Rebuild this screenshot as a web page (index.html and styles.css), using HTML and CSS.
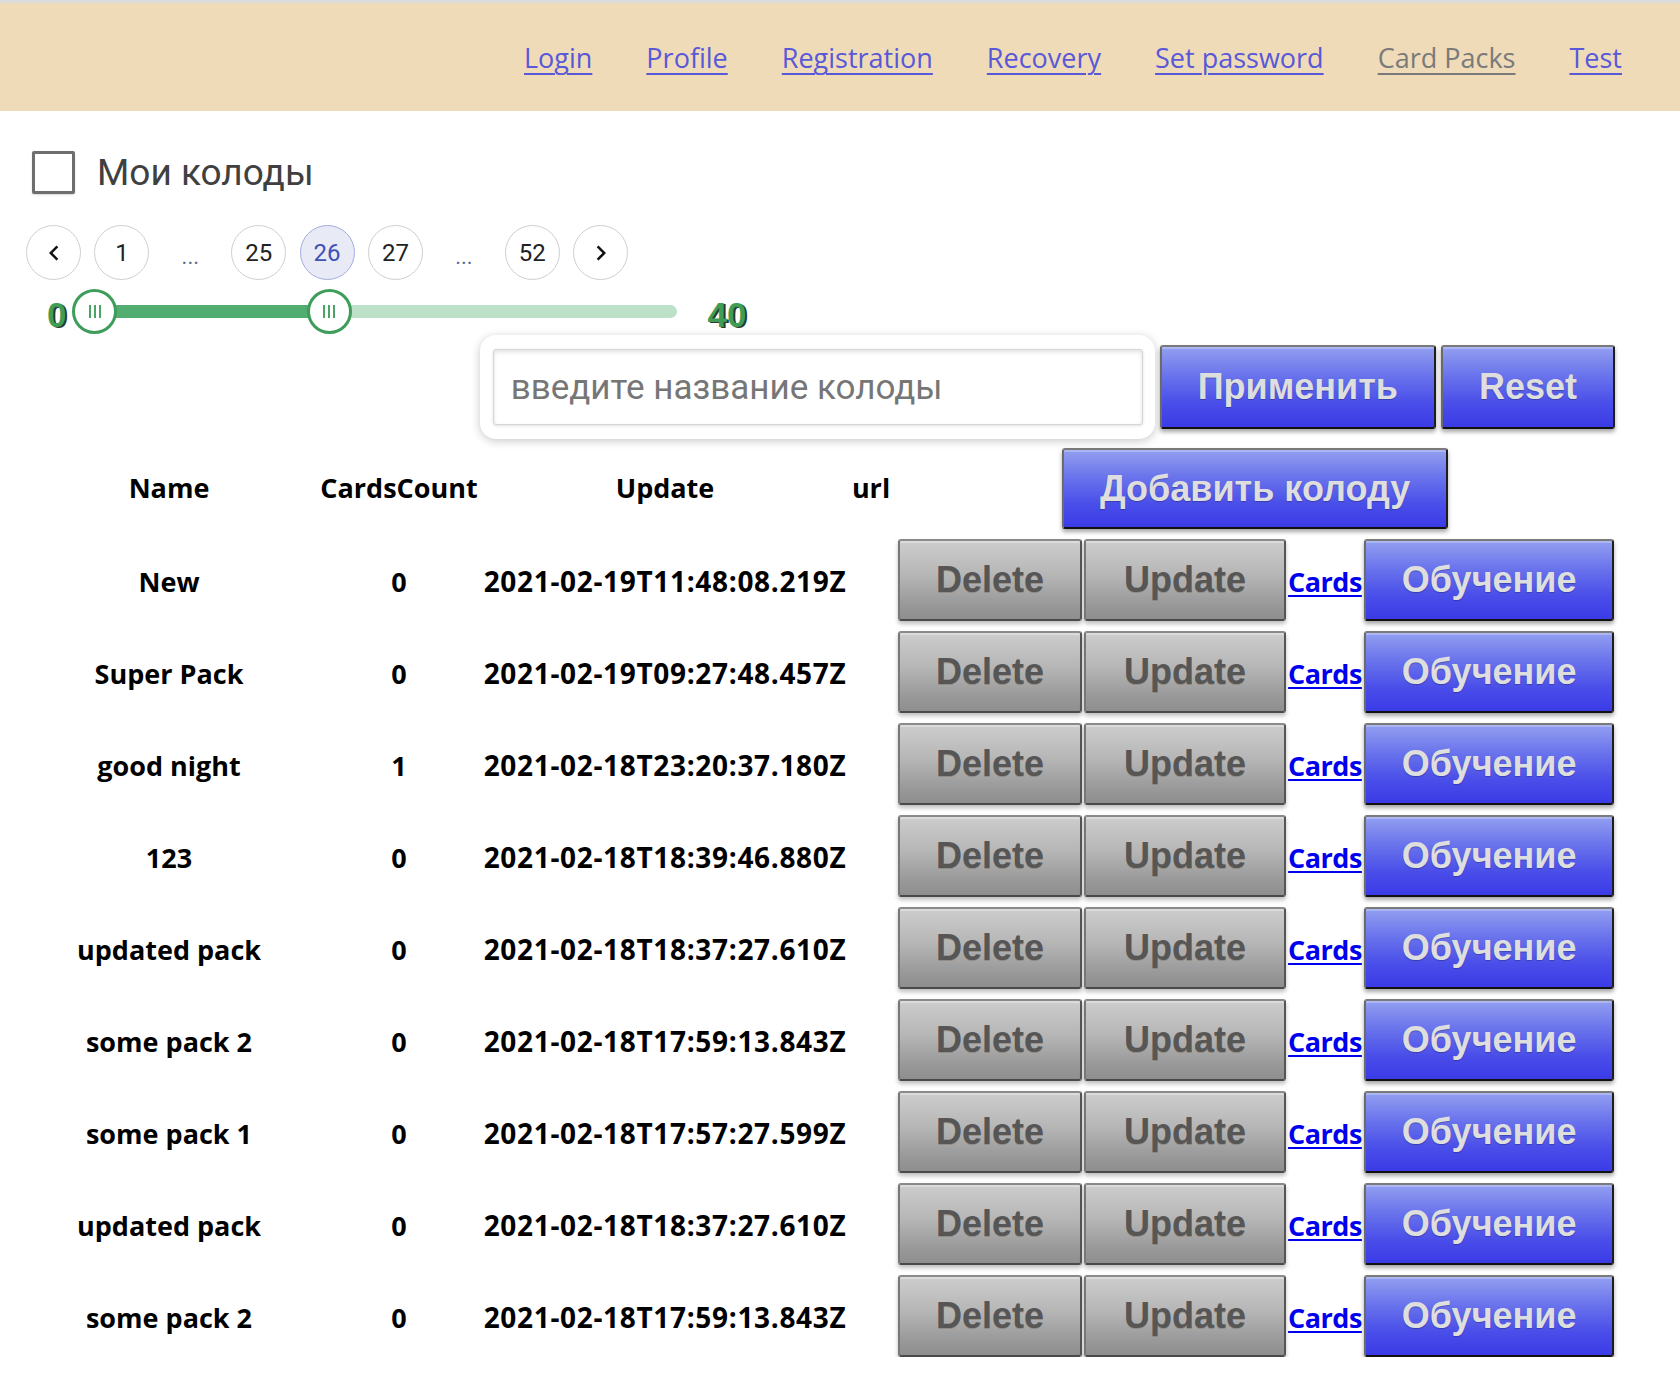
FILE: index.html
```html
<!DOCTYPE html>
<html lang="ru">
<head>
<meta charset="utf-8">
<title>Card Packs</title>
<link rel="stylesheet" href="styles.css">
</head>
<body>
<header class="topbar">
  <nav class="nav">
    <a href="#" class="nav-link">Login</a>
    <a href="#" class="nav-link">Profile</a>
    <a href="#" class="nav-link">Registration</a>
    <a href="#" class="nav-link">Recovery</a>
    <a href="#" class="nav-link">Set password</a>
    <a href="#" class="nav-link nav-link--active">Card Packs</a>
    <a href="#" class="nav-link">Test</a>
  </nav>
</header>

<main class="page">
  <label class="mine">
    <span class="mine-box"></span>
    <span class="mine-text">Мои колоды</span>
  </label>

  <div class="pager">
    <button class="pg pg-arrow" aria-label="prev"><svg viewBox="0 0 24 24" class="chev"><path d="M15.41 7.41L14 6l-6 6 6 6 1.41-1.41L10.83 12z"/></svg></button>
    <button class="pg">1</button>
    <span class="pg-ell">...</span>
    <button class="pg">25</button>
    <button class="pg pg-active">26</button>
    <button class="pg">27</button>
    <span class="pg-ell">...</span>
    <button class="pg">52</button>
    <button class="pg pg-arrow" aria-label="next"><svg viewBox="0 0 24 24" class="chev"><path d="M10 6L8.59 7.41 13.17 12l-4.58 4.59L10 18l6-6z"/></svg></button>
  </div>

  <div class="range">
    <span class="range-val">0</span>
    <div class="slider">
      <div class="track">
        <div class="track-fill" style="width: 40.2%"></div>
      </div>
      <span class="thumb" style="left: 0%"><i></i><i></i><i></i></span>
      <span class="thumb" style="left: 37.4%"><i></i><i></i><i></i></span>
    </div>
    <span class="range-val">40</span>
  </div>

  <div class="search-row">
    <div class="search-card">
      <input class="search-input" type="text" placeholder="введите название колоды">
    </div>
    <button class="btn btn-blue btn-tall">Применить</button>
    <button class="btn btn-blue btn-tall">Reset</button>
  </div>

  <div class="thead">
    <div class="cell">Name</div>
    <div class="cell">CardsCount</div>
    <div class="cell">Update</div>
    <div class="cell">url</div>
    <button class="btn btn-blue btn-add">Добавить колоду</button>
  </div>

  <div class="rows">
    <div class="row"><div class="cell">New</div><div class="cell">0</div><div class="cell cell-date">2021-02-19T11:48:08.219Z</div>
      <div class="actions"><button class="btn btn-gray">Delete</button><button class="btn btn-gray btn-upd">Update</button><a href="#" class="cards-link">Cards</a><button class="btn btn-blue">Обучение</button></div></div>
    <div class="row"><div class="cell">Super Pack</div><div class="cell">0</div><div class="cell cell-date">2021-02-19T09:27:48.457Z</div>
      <div class="actions"><button class="btn btn-gray">Delete</button><button class="btn btn-gray btn-upd">Update</button><a href="#" class="cards-link">Cards</a><button class="btn btn-blue">Обучение</button></div></div>
    <div class="row"><div class="cell">good night</div><div class="cell">1</div><div class="cell cell-date">2021-02-18T23:20:37.180Z</div>
      <div class="actions"><button class="btn btn-gray">Delete</button><button class="btn btn-gray btn-upd">Update</button><a href="#" class="cards-link">Cards</a><button class="btn btn-blue">Обучение</button></div></div>
    <div class="row"><div class="cell">123</div><div class="cell">0</div><div class="cell cell-date">2021-02-18T18:39:46.880Z</div>
      <div class="actions"><button class="btn btn-gray">Delete</button><button class="btn btn-gray btn-upd">Update</button><a href="#" class="cards-link">Cards</a><button class="btn btn-blue">Обучение</button></div></div>
    <div class="row"><div class="cell">updated pack</div><div class="cell">0</div><div class="cell cell-date">2021-02-18T18:37:27.610Z</div>
      <div class="actions"><button class="btn btn-gray">Delete</button><button class="btn btn-gray btn-upd">Update</button><a href="#" class="cards-link">Cards</a><button class="btn btn-blue">Обучение</button></div></div>
    <div class="row"><div class="cell">some pack 2</div><div class="cell">0</div><div class="cell cell-date">2021-02-18T17:59:13.843Z</div>
      <div class="actions"><button class="btn btn-gray">Delete</button><button class="btn btn-gray btn-upd">Update</button><a href="#" class="cards-link">Cards</a><button class="btn btn-blue">Обучение</button></div></div>
    <div class="row"><div class="cell">some pack 1</div><div class="cell">0</div><div class="cell cell-date">2021-02-18T17:57:27.599Z</div>
      <div class="actions"><button class="btn btn-gray">Delete</button><button class="btn btn-gray btn-upd">Update</button><a href="#" class="cards-link">Cards</a><button class="btn btn-blue">Обучение</button></div></div>
    <div class="row"><div class="cell">updated pack</div><div class="cell">0</div><div class="cell cell-date">2021-02-18T18:37:27.610Z</div>
      <div class="actions"><button class="btn btn-gray">Delete</button><button class="btn btn-gray btn-upd">Update</button><a href="#" class="cards-link">Cards</a><button class="btn btn-blue">Обучение</button></div></div>
    <div class="row"><div class="cell">some pack 2</div><div class="cell">0</div><div class="cell cell-date">2021-02-18T17:59:13.843Z</div>
      <div class="actions"><button class="btn btn-gray">Delete</button><button class="btn btn-gray btn-upd">Update</button><a href="#" class="cards-link">Cards</a><button class="btn btn-blue">Обучение</button></div></div>
  </div>
</main>
</body>
</html>
```

FILE: styles.css
```css
* { box-sizing: border-box; }

html, body {
  margin: 0;
  padding: 0;
  background: #ffffff;
}

body {
  font-family: "Open Sans", "Noto Sans", sans-serif;
  color: #000;
}

/* ---------- top bar ---------- */
.topbar {
  height: 111px;
  border-top: 3px solid #dcdcdc;
  background: #efdbb8;
  display: flex;
  align-items: center;
  justify-content: flex-end;
  padding-right: 58px;
}

.nav {
  display: flex;
  gap: 54px;
  padding-top: 2px;
}

.nav-link {
  font-family: "Open Sans", sans-serif;
  font-size: 27px;
  color: #5858d8;
  text-decoration: underline;
  text-decoration-thickness: 2px;
  text-underline-offset: 5px;
  line-height: 1.3;
}

.nav-link--active {
  color: #7a7a7a;
}

/* ---------- page ---------- */
.page {
  display: flex;
  flex-direction: column;
}

.mine {
  margin-top: 40px;
  margin-left: 32px;
  height: 43px;
  display: flex;
  align-items: center;
  gap: 22px;
}

.mine-box {
  width: 43px;
  height: 43px;
  border: 3px solid #6e6e6e;
  border-radius: 2px;
  background: #fff;
  box-shadow: 0 1px 2px rgba(0,0,0,0.15);
}

.mine-text {
  font-family: Roboto, "Liberation Sans", sans-serif;
  font-size: 37px;
  color: #404040;
  line-height: 1;
}

/* ---------- pagination ---------- */
.pager {
  margin-top: 31px;
  margin-left: 26px;
  display: flex;
  align-items: center;
  gap: 13.4px;
  height: 55px;
}

.pg {
  width: 55px;
  height: 55px;
  border-radius: 50%;
  border: 1.5px solid #cfcfcf;
  background: #fff;
  font-family: Roboto, sans-serif;
  font-size: 24px;
  color: #222;
  display: flex;
  align-items: center;
  justify-content: center;
  padding: 0;
}

.pg-active {
  background: #e8eaf6;
  border-color: #a4acdf;
  color: #3f51b5;
}

.pg-ell {
  width: 55px;
  text-align: center;
  font-family: Roboto, sans-serif;
  font-size: 22px;
  color: #5a6c90;
  padding-top: 8px;
}

.chev {
  width: 30px;
  height: 30px;
  fill: #111;
}

/* ---------- range slider ---------- */
.range {
  margin-top: 9px;
  margin-left: 47px;
  height: 45px;
  display: flex;
  align-items: center;
}

.range-val {
  font-family: "Liberation Sans", Arial, sans-serif;
  font-weight: bold;
  font-size: 35px;
  color: #3f9d55;
  text-shadow: 2px 1px 0 #2c3b2f;
  line-height: 1;
  padding-top: 6px;
}

.slider {
  position: relative;
  width: 627px;
  height: 45px;
  margin: 0 8px 0 6px;
  padding: 0 22.5px;
  display: flex;
  align-items: center;
}

.track {
  width: 100%;
  height: 13px;
  border-radius: 7px;
  background: #bde0c9;
  overflow: hidden;
}

.track-fill {
  height: 100%;
  background: #52ad70;
}

.thumb {
  position: absolute;
  top: 0;
  width: 45px;
  height: 45px;
  border-radius: 50%;
  border: 3px solid #3e9d5a;
  background: #fff;
  display: flex;
  align-items: center;
  justify-content: center;
  gap: 3px;
}

.thumb i {
  display: block;
  width: 2px;
  height: 13px;
  background: #4aa466;
}

/* ---------- search row ---------- */
.search-row {
  margin-top: 1px;
  display: flex;
  justify-content: flex-end;
  align-items: flex-start;
  gap: 5px;
  padding-right: 65px;
  height: 104px;
}

.search-card {
  width: 675px;
  height: 104px;
  border-radius: 16px;
  background: #fff;
  box-shadow: 0 2px 10px rgba(0,0,0,0.22);
  padding: 14px 12px 14px 13px;
}

.search-input {
  width: 100%;
  height: 76px;
  border: 1px solid #d6d6d6;
  border-radius: 3px;
  box-shadow: inset 0 2px 4px rgba(0,0,0,0.12), 0 1px 3px rgba(0,0,0,0.12);
  padding: 0 17px;
  font-family: Roboto, sans-serif;
  font-size: 35px;
  color: #333;
  outline: none;
  background: #fff;
}

.search-input::placeholder {
  color: #767676;
}

/* ---------- buttons ---------- */
.btn {
  font-family: "Liberation Sans", Arial, sans-serif;
  font-weight: bold;
  font-size: 36px;
  height: 82px;
  padding: 0 36px;
  border: 2px solid;
  border-radius: 3px;
  white-space: nowrap;
  cursor: pointer;
}

.btn-blue {
  color: #dedede;
  background: linear-gradient(#939ff0 0%, #6a74ec 35%, #4a4ee9 70%, #3b3be6 100%);
  border-color: #7a7a7a #1e1e1e #111 #6a6a6a;
  box-shadow: inset 0 2px 0 rgba(255,255,255,0.25), 0 3px 4px rgba(0,0,0,0.35);
  text-shadow: 0 1px 1px rgba(0,0,0,0.25);
}

.btn-gray {
  color: #565656;
  background: linear-gradient(#cdcdcd 0%, #b5b5b5 45%, #9a9a9a 80%, #8e8e8e 100%);
  border-color: #8a8a8a #555 #4a4a4a #777;
  box-shadow: inset 0 2px 0 rgba(255,255,255,0.3), 0 3px 4px rgba(0,0,0,0.25);
  text-shadow: 0 1px 0 rgba(120,90,60,0.35);
}

.btn-upd {
  padding: 0 38px;
}

.btn-tall {
  height: 84px;
  margin-top: 10px;
}

/* ---------- table ---------- */
.thead,
.row {
  display: grid;
  grid-template-columns: 302px 158px 374px 38px auto;
  align-items: center;
  padding-left: 18px;
}

.thead {
  margin-top: 9px;
  height: 81px;
}

.cell {
  justify-self: center;
  white-space: nowrap;
  font-weight: bold;
  font-size: 27px;
  line-height: 1.2;
}

.btn-add {
  justify-self: start;
  margin-left: 172px;
  height: 81px;
}

.rows {
  margin-top: 10px;
  display: flex;
  flex-direction: column;
  gap: 10px;
}

.row {
  grid-template-columns: 302px 158px 374px auto;
  height: 82px;
}

.row .cell {
  font-size: 27px;
  padding-top: 4px;
}

.row .cell-date {
  font-size: 28px;
  letter-spacing: 0.67px;
}

.actions {
  margin-left: 46px;
  display: flex;
  align-items: center;
  gap: 2px;
}

.cards-link {
  font-weight: bold;
  font-size: 27px;
  color: #0000ee;
  text-decoration: underline;
  text-decoration-thickness: 2px;
  text-underline-offset: 3px;
  padding-top: 3px;
  letter-spacing: -0.5px;
}
```
